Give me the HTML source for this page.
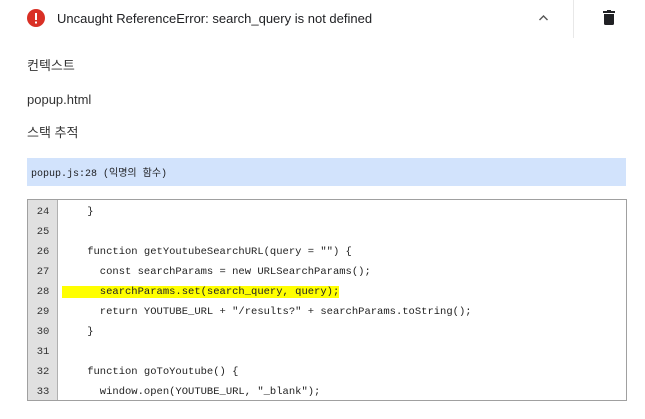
<!DOCTYPE html>
<html><head><meta charset="utf-8"><style>
*{margin:0;padding:0;box-sizing:border-box}
body{width:645px;height:419px;background:#fff;font-family:"Liberation Sans","Noto Sans CJK KR",sans-serif;color:#202124;position:relative;overflow:hidden}
.abs{position:absolute}
.t{font-size:13px;color:#333;line-height:16px}
.code{left:27px;top:199px;width:600px;height:202px;border:1px solid #a0a0a0;overflow:hidden}
.gut{position:absolute;left:0;top:0;width:30px;height:100%;background:#e0e0e0;border-right:1px solid #b0b0b0}
.ln{position:absolute;left:0;width:30px;text-align:center;font:10.5px "Liberation Mono","Noto Sans CJK KR",monospace;color:#333}
.cl{position:absolute;left:34px;font:10.5px "Liberation Mono",monospace;color:#222;white-space:pre}
.hl{background:#ffff00}
</style></head><body>
<svg class="abs" style="left:27px;top:9px" width="18" height="18" viewBox="0 0 18 18"><circle cx="9" cy="9" r="9" fill="#d93025"/><rect x="8" y="4" width="2" height="7" fill="#fff"/><rect x="8" y="12.5" width="2" height="2" fill="#fff"/></svg>
<div class="abs" style="left:57px;top:11px;font-size:13px;line-height:16px;color:#202124">Uncaught ReferenceError: search_query is not defined</div>
<svg class="abs" style="left:538px;top:14px" width="11" height="8" viewBox="0 0 11 8"><path d="M1.5 6 L5.5 2 L9.5 6" fill="none" stroke="#555" stroke-width="1.4"/></svg>
<div class="abs" style="left:573px;top:0;width:1px;height:38px;background:#e8e8e8"></div>
<svg class="abs" style="left:603px;top:10px" width="12" height="15" viewBox="0 0 12 15"><rect x="0" y="1" width="12" height="2" fill="#202124"/><rect x="4" y="0" width="4" height="2" fill="#202124"/><path d="M1 4 H11 V13.5 Q11 15 9.5 15 H2.5 Q1 15 1 13.5 Z" fill="#202124"/></svg>
<div class="abs t" style="left:27px;top:58px">컨텍스트</div>
<div class="abs t" style="left:27px;top:92px">popup.html</div>
<div class="abs t" style="left:27px;top:125px">스택 추적</div>
<div class="abs" style="left:27px;top:158px;width:599px;height:28px;background:#d2e3fc;font:10px 'Liberation Mono','Noto Sans CJK KR',monospace;color:#202124;padding:6px 0 0 4px">popup.js:28 (익명의 함수)</div>
<div class="abs code">
<div class="gut"></div>
<div class="ln" style="top:6px">24</div><div class="cl" style="top:6px">    }</div>
<div class="ln" style="top:26px">25</div>
<div class="ln" style="top:46px">26</div><div class="cl" style="top:46px">    function getYoutubeSearchURL(query = "") {</div>
<div class="ln" style="top:66px">27</div><div class="cl" style="top:66px">      const searchParams = new URLSearchParams();</div>
<div class="ln" style="top:86px">28</div><div class="cl hl" style="top:86px">      searchParams.set(search_query, query);</div>
<div class="ln" style="top:106px">29</div><div class="cl" style="top:106px">      return YOUTUBE_URL + "/results?" + searchParams.toString();</div>
<div class="ln" style="top:126px">30</div><div class="cl" style="top:126px">    }</div>
<div class="ln" style="top:146px">31</div>
<div class="ln" style="top:166px">32</div><div class="cl" style="top:166px">    function goToYoutube() {</div>
<div class="ln" style="top:186px">33</div><div class="cl" style="top:186px">      window.open(YOUTUBE_URL, "_blank");</div>
</div>
</body></html>
